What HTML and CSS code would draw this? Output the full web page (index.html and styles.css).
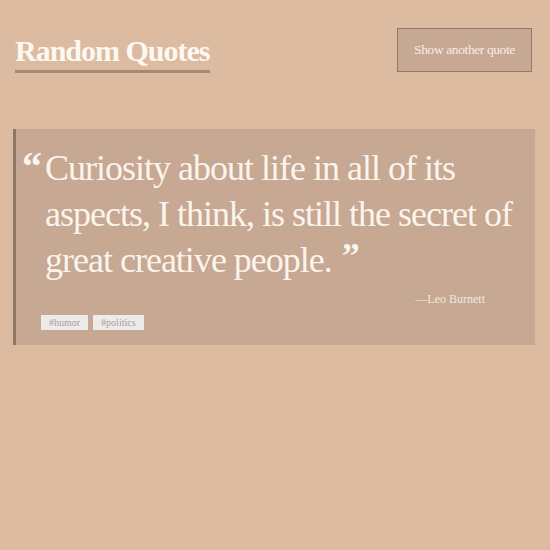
FILE: index.html
```html
<!DOCTYPE html>
<html>
<head>
<meta charset="utf-8">
<link rel="stylesheet" href="styles.css">
</head>
<body>
<header class="top">
  <h1 class="title">Random Quotes</h1>
  <button class="next-btn">Show another quote</button>
</header>
<section class="card">
  <div class="quote">
    <span class="mark open">“</span>
    <p class="text"><span class="words">Curiosity about life in all of its aspects, I think, is still the secret of great creative people.</span><span class="mark close">”</span></p>
  </div>
  <div class="author">—Leo Burnett</div>
  <div class="tags">
    <span class="tag">#humor</span>
    <span class="tag">#politics</span>
  </div>
</section>
</body>
</html>
```

FILE: styles.css
```css
html, body {
  margin: 0;
  padding: 0;
  background: #dcbba1;
  font-family: "Liberation Serif", "Times New Roman", serif;
}
body {
  padding: 0 15px 0 13px;
}
.top {
  display: flex;
  justify-content: space-between;
  align-items: flex-start;
  padding-top: 28px;
}
.title {
  margin: 6px 0 0 2px;
  font-size: 30px;
  letter-spacing: -1px;
  font-weight: bold;
  color: #fdf8f2;
  line-height: 34px;
  padding-bottom: 2px;
  border-bottom: 3px solid #a88a73;
}
.next-btn {
  width: 135px;
  height: 44px;
  margin-right: 3px;
  background: #c6a893;
  border: 1px solid #94796a;
  color: #f7ede4;
  font-family: inherit;
  font-size: 13.5px;
  letter-spacing: -0.4px;
  padding: 0;
}
.card {
  margin-top: 56px;
  background: #c6a893;
  border-left: 3px solid #8f7765;
  padding: 16px 14px 15px 0;
}
.quote {
  display: flex;
  align-items: flex-start;
}
.mark {
  font-weight: bold;
  color: #fbf4ec;
}
.open {
  width: 26px;
  flex: none;
  text-align: right;
  font-size: 40px;
  line-height: 44px;
  padding-right: 3px;
}
.close {
  display: inline-block;
  font-size: 36px;
  margin-left: 10px;
  line-height: 30px;
  vertical-align: 4px;
}
.text {
  margin: 0;
  font-size: 36px;
  letter-spacing: -1px;
  line-height: 46px;
  color: #fbf4ec;
}
.author {
  text-align: right;
  margin: 8px 36px 0 0;
  font-size: 12px;
  color: #f3e8de;
  line-height: 16px;
}
.tags {
  display: flex;
  gap: 5px;
  margin: 8px 0 0 25px;
}
.tag {
  background: #ecebe9;
  color: #a59e9b;
  font-size: 10px;
  padding: 2px 8px;
  line-height: 11px;
}
```
